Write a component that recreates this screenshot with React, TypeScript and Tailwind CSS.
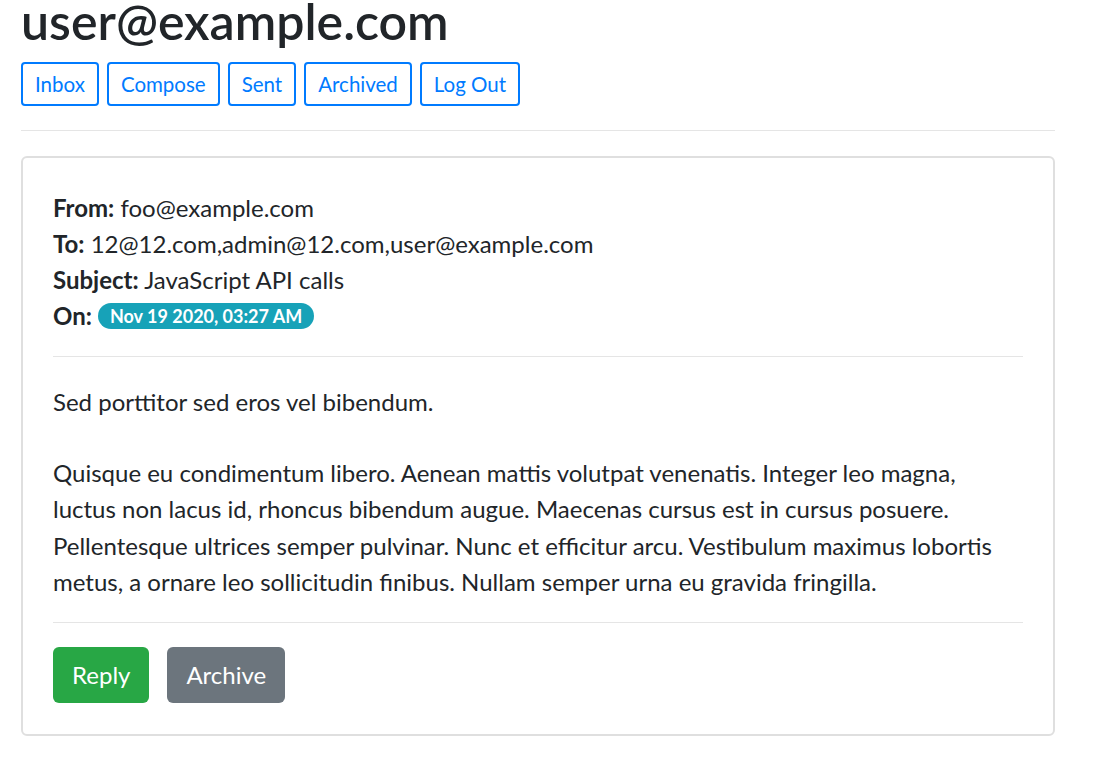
const navItems = ['Inbox', 'Compose', 'Sent', 'Archived', 'Log Out'];

export default function App() {
  return (
    <div className="min-h-[760px] bg-white px-[21px] text-[#212529] font-['Lato','Noto_Sans',sans-serif] w-[1076px]">
      <h2 className="h-[50px] text-[50px] leading-[42px] font-semibold">user@example.com</h2>

      <div className="mt-[12px] flex gap-2">
        {navItems.map((item) => (
          <button
            key={item}
            className="h-[44px] px-[12px] flex items-center border-2 border-[#007bff] rounded-[4px] text-[#007bff] text-[20.5px]"
          >
            {item}
          </button>
        ))}
      </div>

      <hr className="mt-[24px] border-t border-[#e5e5e5]" />

      <div className="mt-[25px] border-2 border-[#dfdfdf] rounded-[6px] px-[30px] pt-[32px] pb-[31px] text-[24px] leading-[36px]">
        <div>
          <b>From:</b> foo@example.com
        </div>
        <div>
          <b>To:</b> 12@12.com,admin@12.com,user@example.com
        </div>
        <div>
          <b>Subject:</b> JavaScript API calls
        </div>
        <div className="flex items-center gap-[6px]">
          <b>On:</b>
          <span className="h-[26px] px-[12px] flex items-center rounded-full bg-[#17a2b8] text-white text-[18px] font-bold">
            Nov 19 2020, 03:27 AM
          </span>
        </div>

        <hr className="mt-[22px] mb-[27px] border-t border-[#e5e5e5]" />

        <div>Sed porttitor sed eros vel bibendum.</div>
        <p className="mt-[35px] leading-[36.3px]">
          Quisque eu condimentum libero. Aenean mattis volutpat venenatis. Integer leo magna,
          <br />
          luctus non lacus id, rhoncus bibendum augue. Maecenas cursus est in cursus posuere.
          <br />
          Pellentesque ultrices semper pulvinar. Nunc et efficitur arcu. Vestibulum maximus lobortis
          <br />
          metus, a ornare leo sollicitudin finibus. Nullam semper urna eu gravida fringilla.
        </p>

        <hr className="mt-[22px] border-t border-[#e5e5e5]" />

        <div className="mt-[24px] flex gap-[18px]">
          <button className="h-[56px] px-[19px] rounded-[6px] bg-[#28a745] text-white text-[24px]">Reply</button>
          <button className="h-[56px] px-[19px] rounded-[6px] bg-[#6c757d] text-white text-[24px]">Archive</button>
        </div>
      </div>
    </div>
  );
}
